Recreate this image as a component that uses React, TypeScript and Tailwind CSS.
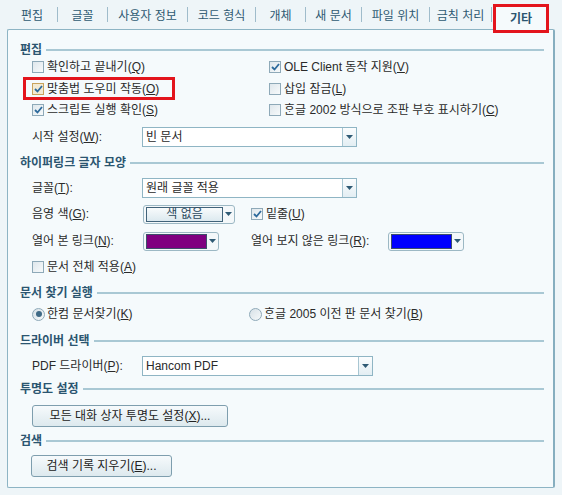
import React from 'react'

const font = "font-['Liberation_Sans','Noto_Sans_CJK_KR',sans-serif]"
const OLD_HANGUL = 'ᄒᆞᆫ글'

const tabs = [
  { name: '편집', w: 'w-[51px]' },
  { name: '글꼴', w: 'w-[50px]' },
  { name: '사용자 정보', w: 'w-[80px]' },
  { name: '코드 형식', w: 'w-[68px]' },
  { name: '개체', w: 'w-[50px]' },
  { name: '새 문서', w: 'w-[56px]' },
  { name: '파일 위치', w: 'w-[68px]' },
  { name: '금칙 처리', w: 'w-[62px]' },
]

function Acc({ text, k, tail = '' }: { text: string; k: string; tail?: string }) {
  return (
    <span className="whitespace-nowrap">
      {text}(<u className="underline-offset-1">{k}</u>){tail}
    </span>
  )
}

function Arrow() {
  return (
    <svg width="7" height="4" viewBox="0 0 7 4">
      <path d="M0 0h7L3.5 4z" fill="#2f5a74" />
    </svg>
  )
}

function Check({ checked, hot }: { checked?: boolean; hot?: boolean }) {
  return (
    <span
      className={`flex h-[12px] w-[12px] shrink-0 items-center justify-center border ${
        hot ? 'border-[#c9a35c] bg-[#f3ead2]' : 'border-[#8ea9b8] bg-gradient-to-br from-[#dfe7ec] to-[#f7fafb]'
      }`}
    >
      {checked && (
        <svg width="9" height="8" viewBox="0 0 9 8">
          <path d="M1 4l2.5 2.5L8 1" stroke="#2d6a9c" strokeWidth="1.8" fill="none" />
        </svg>
      )}
    </span>
  )
}

function CheckRow({ checked, hot, children }: { checked?: boolean; hot?: boolean; children: React.ReactNode }) {
  return (
    <div className="flex items-center gap-[3px]">
      <Check checked={checked} hot={hot} />
      <span>{children}</span>
    </div>
  )
}

function Radio({ on, children }: { on?: boolean; children: React.ReactNode }) {
  return (
    <div className="flex items-center gap-[2px]">
      <span className="flex h-[13px] w-[13px] items-center justify-center rounded-full border border-[#8ea9b8] bg-gradient-to-br from-[#d7e1e7] to-[#f6f9fa]">
        {on && <span className="h-[6px] w-[6px] rounded-full bg-[#3f6a86]" />}
      </span>
      <span>{children}</span>
    </div>
  )
}

function Select({ value, w }: { value: string; w: string }) {
  return (
    <div className={`flex h-[20px] ${w} border border-[#8fb5c4] bg-white`}>
      <span className="flex-1 pl-[3px] leading-[18px]">{value}</span>
      <span className="flex w-[14px] items-center justify-center border-l border-[#a8c6d2] bg-gradient-to-b from-[#fbfdfe] to-[#e3eef3]">
        <Arrow />
      </span>
    </div>
  )
}

function ColorPick({ fill, w, label }: { fill?: string; w: string; label?: string }) {
  return (
    <div className={`flex h-[19px] ${w} items-center rounded-[3px] border border-[#9cb8c4] bg-[#f4f8fa] pl-[2px]`}>
      {label ? (
        <span className="flex h-[15px] flex-1 items-center justify-center border border-[#41637a] bg-gradient-to-b from-[#f8fbfc] to-[#dce9ef] text-[#2c4a5e]">
          {label}
        </span>
      ) : (
        <span className={`h-[15px] flex-1 border border-[#3e4f6a] ${fill}`} />
      )}
      <span className="flex w-[11px] items-center justify-center">
        <Arrow />
      </span>
    </div>
  )
}

function Header({ title, mt }: { title: string; mt: string }) {
  return (
    <div className={`flex h-[16px] items-center gap-[4px] ${mt}`}>
      <span className="font-bold text-[#2b5570]">{title}</span>
      <span className="mt-[-1px] h-[2px] flex-1 bg-[#a9c8d4]" />
    </div>
  )
}

function Btn({ children, w }: { children: React.ReactNode; w: string }) {
  return (
    <div
      className={`flex h-[22px] ${w} items-center justify-center rounded-[3px] border border-[#7e9eae] bg-gradient-to-b from-[#f6fafc] to-[#dde9ee] text-[#222]`}
    >
      {children}
    </div>
  )
}

export default function App() {
  return (
    <div className={`h-[495px] w-[562px] bg-[#eef5f8] text-[12px] text-[#2a2a2a] ${font}`}>
      {/* Tabs */}
      <div className="flex h-[33px] pl-[7px]">
        {tabs.map((t) => (
          <div key={t.name} className={`flex h-[29px] ${t.w} items-center`}>
            <span className="flex-1 pt-[2px] text-center text-[#2f5a72]">{t.name}</span>
            <span className="h-[15px] w-px bg-[#9fbccb]" />
          </div>
        ))}
        <div className="relative z-10 ml-[1px] mt-[4px] flex h-[29px] w-[56px] items-center justify-center border-[3px] border-[#e3141c] bg-[#f5fafc] font-bold text-[#2b5570]">
          기타
        </div>
      </div>

      {/* Panel */}
      <div className="-mt-[4px] ml-[7px] h-[459px] w-[548px] rounded-[2px] border border-[#8db4c4] border-r-[2px] border-r-[#86aebf] bg-[#f5fafc] pl-[12px] pr-[9px]">
        <Header title="편집" mt="mt-[12px]" />
        <div className="grid grid-cols-[237px_1fr] pl-[12px]">
          <div className="flex h-[18px] items-center">
            <CheckRow><Acc text="확인하고 끝내기" k="Q" /></CheckRow>
          </div>
          <div className="flex h-[18px] items-center">
            <CheckRow checked><Acc text="OLE Client 동작 지원" k="V" /></CheckRow>
          </div>
          <div className="mt-[1px] flex h-[23px] items-center">
            <div className="-ml-[9px] flex h-[23px] w-[152px] items-center border-[3px] border-[#e3141c] pl-[6px]">
              <CheckRow checked hot><Acc text="맞춤법 도우미 작동" k="O" /></CheckRow>
            </div>
          </div>
          <div className="mt-[1px] flex h-[23px] items-center">
            <CheckRow><Acc text="삽입 잠금" k="L" /></CheckRow>
          </div>
          <div className="mt-[1px] flex h-[18px] items-center">
            <CheckRow checked><Acc text="스크립트 실행 확인" k="S" /></CheckRow>
          </div>
          <div className="mt-[1px] flex h-[18px] items-center">
            <CheckRow><Acc text={`${OLD_HANGUL} 2002 방식으로 조판 부호 표시하기`} k="C" /></CheckRow>
          </div>
        </div>
        <div className="mt-[8px] flex h-[20px] items-center pl-[12px]">
          <span className="w-[110px]"><Acc text="시작 설정" k="W" tail=":" /></span>
          <Select value="빈 문서" w="w-[215px]" />
        </div>

        <Header title="하이퍼링크 글자 모양" mt="mt-[8px]" />
        <div className="mt-[7px] flex h-[20px] items-center pl-[12px]">
          <span className="w-[110px]"><Acc text="글꼴" k="T" tail=":" /></span>
          <Select value="원래 글꼴 적용" w="w-[215px]" />
        </div>
        <div className="mt-[6px] flex h-[20px] items-center pl-[12px]">
          <span className="w-[111px]"><Acc text="음영 색" k="G" tail=":" /></span>
          <ColorPick w="w-[92px]" label="색 없음" />
          <div className="ml-[16px]">
            <CheckRow checked><Acc text="밑줄" k="U" /></CheckRow>
          </div>
        </div>
        <div className="mt-[7px] flex h-[20px] items-center pl-[12px]">
          <span className="w-[111px]"><Acc text="열어 본 링크" k="N" tail=":" /></span>
          <ColorPick w="w-[76px]" fill="bg-[#800080]" />
          <span className="ml-[32px] w-[137px]"><Acc text="열어 보지 않은 링크" k="R" tail=":" /></span>
          <ColorPick w="w-[76px]" fill="bg-[#0000ff]" />
        </div>
        <div className="mt-[7px] flex h-[18px] items-center pl-[12px]">
          <CheckRow><Acc text="문서 전체 적용" k="A" /></CheckRow>
        </div>

        <Header title="문서 찾기 실행" mt="mt-[9px]" />
        <div className="mt-[4px] grid h-[18px] grid-cols-[217px_1fr] items-center pl-[12px]">
          <Radio on><Acc text="한컴 문서찾기" k="K" /></Radio>
          <Radio><Acc text={`${OLD_HANGUL} 2005 이전 판 문서 찾기`} k="B" /></Radio>
        </div>

        <Header title="드라이버 선택" mt="mt-[10px]" />
        <div className="mt-[7px] flex h-[20px] items-center pl-[12px]">
          <span className="w-[110px]"><Acc text="PDF 드라이버" k="P" tail=":" /></span>
          <Select value="Hancom PDF" w="w-[231px]" />
        </div>

        <Header title="투명도 설정" mt="mt-[5px]" />
        <div className="mt-[8px] pl-[12px]">
          <Btn w="w-[196px]"><Acc text="모든 대화 상자 투명도 설정" k="X" tail="..." /></Btn>
        </div>

        <Header title="검색" mt="mt-[6px]" />
        <div className="mt-[6px] pl-[11px]">
          <Btn w="w-[141px]"><Acc text="검색 기록 지우기" k="E" tail="..." /></Btn>
        </div>
      </div>
    </div>
  )
}
